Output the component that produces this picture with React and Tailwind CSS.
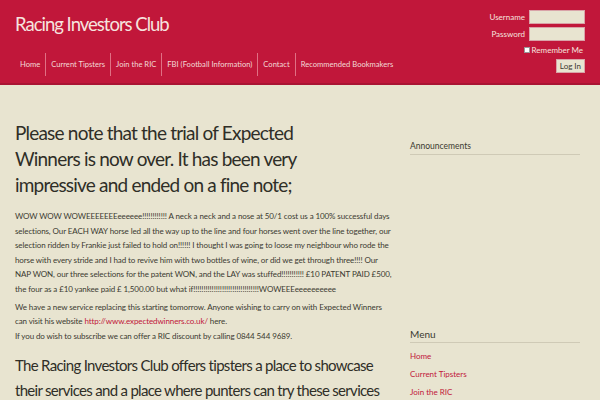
const navItems = [
  "Home",
  "Current Tipsters",
  "Join the RIC",
  "FBI (Football Information)",
  "Contact",
  "Recommended Bookmakers",
];

const App = () => {
  return (
    <div className="w-[600px] h-[400px] overflow-hidden bg-[#e8e4d0] font-['Lato','Open_Sans',sans-serif] text-[#3b3a30]">
      {/* Header */}
      <div className="h-[85px] bg-[#c1173a] border-b-2 border-[#a91433] flex justify-between px-[15px]">
        <div className="flex flex-col justify-between">
          <h1 className="mt-[10px] text-[18.5px] tracking-[-1px] leading-[28px] text-[#f6e3df]">Racing Investors Club</h1>
          <nav className="flex items-center h-[23px] mb-[7px]">
            {navItems.map((item, i) => (
              <a
                key={item}
                className={
                  "px-[5px] text-[7.6px] text-[#f3d9d6] leading-[23px] " +
                  (i < navItems.length - 1 ? "border-r border-[#e07084]" : "")
                }
              >
                {item}
              </a>
            ))}
          </nav>
        </div>

        <form className="flex flex-col items-end pt-[10px] text-[8px] text-[#f6e3df]">
          <div className="flex items-center gap-[4px]">
            <label>Username</label>
            <input className="w-[56px] h-[14px] bg-[#e8e4d0] border border-[#d9a3a8]" />
          </div>
          <div className="flex items-center gap-[4px] mt-[3px]">
            <label>Password</label>
            <input type="password" className="w-[56px] h-[14px] bg-[#e8e4d0] border border-[#d9a3a8]" />
          </div>
          <div className="flex items-center gap-[2px] mt-[3px] mr-[2px]">
            <span className="w-[6px] h-[6px] bg-white border border-[#999]"></span>
            <span>Remember Me</span>
          </div>
          <button
            type="button"
            className="mt-[3px] px-[3px] h-[14px] text-[8px] leading-[12px] text-[#3b3a30] bg-[#e8e4d0] border border-[#d9a3a8]"
          >
            Log In
          </button>
        </form>
      </div>

      {/* Content */}
      <div className="flex">
        <div className="w-[377px] ml-[15px] shrink-0">
          <h2 className="mt-[35px] w-[335px] text-[19px] tracking-[-0.8px] leading-[26px] text-[#2f2e27]">
            Please note that the trial of Expected Winners is now over. It has been very impressive and ended on a fine note;
          </h2>
          <p className="mt-[11px] text-[8px] tracking-[-0.1px] leading-[14.5px]">
            WOW WOW WOWEEEEEEEeeeeee!!!!!!!!!!!! A neck a neck and a nose at 50/1 cost us a 100% successful days
            selections, Our EACH WAY horse led all the way up to the line and four horses went over the line together, our
            selection ridden by Frankie just failed to hold on!!!!!! I thought I was going to loose my neighbour who rode the
            horse with every stride and I had to revive him with two bottles of wine, or did we get through three!!!! Our NAP
            WON, our three selections for the patent WON, and the LAY was stuffed!!!!!!!!!!! £10 PATENT PAID £500, the
            four as a £10 yankee paid £ 1,500.00 but what if!!!!!!!!!!!!!!!!!!!!!!!!!!!!!!!!WOWEEEeeeeeeeeee
          </p>
          <p className="mt-[4px] text-[8px] tracking-[-0.1px] leading-[14px]">
            We have a new service replacing this starting tomorrow. Anyone wishing to carry on with Expected Winners can
            visit his website <a className="text-[#c1173a]">http://www.expectedwinners.co.uk/</a> here.
          </p>
          <p className="mt-[1px] text-[8px] tracking-[-0.1px] leading-[14px]">
            If you do wish to subscribe we can offer a RIC discount by calling 0844 544 9689.
          </p>
          <h2 className="mt-[10px] text-[15px] tracking-[-0.7px] leading-[25px] text-[#2f2e27]">
            The Racing Investors Club offers tipsters a place to showcase their services and a place where punters can try
            these services before they buy.
          </h2>
        </div>

        <aside className="w-[170px] ml-[18px] mt-[54px] text-[8px]">
          <div>
            <h3 className="text-[8.5px] leading-[14px] pb-[1px] border-b border-[#cfcab6]">Announcements</h3>
          </div>
          <div className="mt-[172px]">
            <h3 className="text-[10px] leading-[14px] pb-[1px] border-b border-[#cfcab6]">Menu</h3>
            <ul className="mt-[4px] text-[#c1173a]">
              <li className="leading-[18px]">Home</li>
              <li className="leading-[18px]">Current Tipsters</li>
              <li className="leading-[18px]">Join the RIC</li>
            </ul>
          </div>
        </aside>
      </div>
    </div>
  );
};

export default App;
